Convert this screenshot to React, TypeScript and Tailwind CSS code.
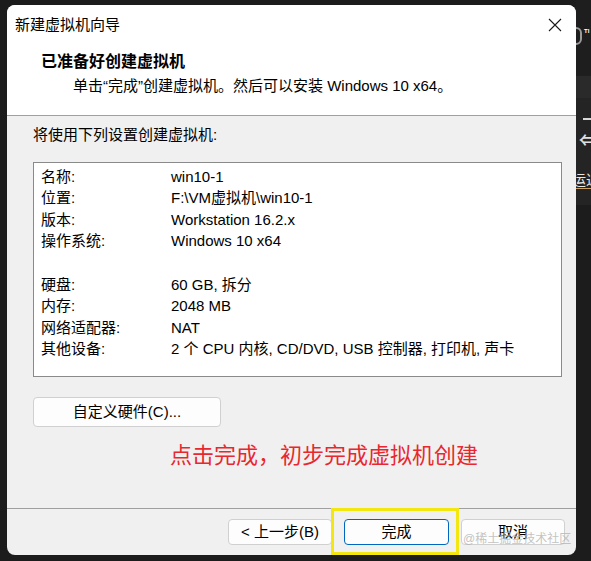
import React from "react";

type Row = { label: string; value: string } | null;

const rows: Row[] = [
  { label: "名称:", value: "win10-1" },
  { label: "位置:", value: "F:\\VM虚拟机\\win10-1" },
  { label: "版本:", value: "Workstation 16.2.x" },
  { label: "操作系统:", value: "Windows 10 x64" },
  null,
  { label: "硬盘:", value: "60 GB, 拆分" },
  { label: "内存:", value: "2048 MB" },
  { label: "网络适配器:", value: "NAT" },
  { label: "其他设备:", value: "2 个 CPU 内核, CD/DVD, USB 控制器, 打印机, 声卡" },
];

function CloseIcon() {
  return (
    <svg width="14" height="14" viewBox="0 0 14 14" fill="none">
      <path d="M1 1 L13 13 M13 1 L1 13" stroke="#1a1a1a" strokeWidth="1.1" />
    </svg>
  );
}

function SideStrip() {
  // bits of the window behind the dialog
  return (
    <div className="flex w-[15px] flex-col overflow-hidden">
      <div className="flex h-[76px] items-start bg-[#1e1e1e] pt-[27px]">
        <div className="-ml-[6px] h-[18px] w-[12px] rounded-full border-2 border-[#9a9a9a]"></div>
        <span className="ml-[2px] text-[6px] font-bold leading-[8px] text-white">TI</span>
      </div>
      <div className="h-[22px] bg-[#2a2a2a]"></div>
      <div className="flex h-[107px] flex-col bg-[#242424]">
        <div className="ml-[7px] mt-[20px] h-[2px] w-[10px] bg-[#d8d8d8]"></div>
        <div className="ml-[3px] mt-[12px] text-[16px] font-bold leading-[18px] text-[#e0e0e0]">⇐</div>
        <div className="-ml-[4px] mt-[22px] whitespace-nowrap border-b border-[#d0a060] text-[14px] leading-[16px] text-[#e8e8e8]">
          运近
        </div>
      </div>
      <div className="flex-1 bg-[#1c1c1c]"></div>
    </div>
  );
}

export default function App() {
  return (
    <div className="flex h-[561px] w-[591px] overflow-hidden bg-[#1c1c1c] font-['Liberation_Sans','Noto_Sans_CJK_SC',sans-serif] text-[#000]">
      <div className="relative ml-[7px] mt-[5px] flex h-[550px] w-[569px] flex-col overflow-hidden rounded-lg bg-[#f0f0f0]">
        {/* header */}
        <div className="flex h-[110px] flex-col bg-white">
          <div className="flex h-[40px] items-center justify-between pl-[8px] pr-[14px]">
            <span className="text-[15px] leading-[20px]">新建虚拟机向导</span>
            <CloseIcon />
          </div>
          <div className="mt-[7px] pl-[34px] text-[16px] font-bold leading-[20px]">已准备好创建虚拟机</div>
          <div className="mt-[4px] pl-[66px] text-[15px] leading-[20px]">
            单击“完成”创建虚拟机。然后可以安装 Windows 10 x64。
          </div>
        </div>
        <div className="h-px bg-[#a0a0a0]"></div>

        {/* body */}
        <div className="flex flex-1 flex-col pl-[26px] pt-[9px]">
          <div className="text-[15px] leading-[20px]">将使用下列设置创建虚拟机:</div>
          <div className="mt-[17px] h-[215px] w-[529px] border border-[#8a8a8a] bg-white pt-[3px] pl-[7px]">
            {rows.map((r, i) =>
              r ? (
                <div key={i} className="flex h-[21.6px] items-center text-[15px]">
                  <span className="w-[130px] shrink-0">{r.label}</span>
                  <span className="whitespace-nowrap">{r.value}</span>
                </div>
              ) : (
                <div key={i} className="h-[21.6px]"></div>
              )
            )}
          </div>
          <button className="mt-[20px] flex h-[30px] w-[188px] items-center justify-center rounded-[4px] border border-[#d0d0d0] bg-[#fdfdfd] text-[15px]">
            自定义硬件(C)...
          </button>
          <div className="ml-[137px] mt-[14px] text-[22px] leading-[30px] text-[#e8282e]">
            点击完成，初步完成虚拟机创建
          </div>
        </div>

        {/* footer */}
        <div className="h-px bg-[#a0a0a0]"></div>
        <div className="flex h-[46px] items-start justify-end gap-[12px] pr-[11px] pt-[10px]">
          <button className="flex h-[26px] w-[104px] items-center justify-center rounded-[4px] border border-[#d0d0d0] bg-[#fdfdfd] text-[15px]">
            &lt; 上一步(B)
          </button>
          <button className="flex h-[26px] w-[105px] items-center justify-center rounded-[4px] border border-[#0067c0] bg-[#fdfdfd] text-[15px]">
            完成
          </button>
          <button className="flex h-[26px] w-[104px] items-center justify-center rounded-[4px] border border-[#d0d0d0] bg-[#fdfdfd] text-[15px]">
            取消
          </button>
        </div>

        {/* annotation + watermark */}
        <div className="absolute left-[324px] top-[503px] h-[47px] w-[128px] border-[3px] border-[#f4e70f]"></div>
        <div className="absolute left-[456px] top-[526px] whitespace-nowrap text-[12px] leading-[16px] text-[#b4b4b4]/80">
          @稀土掘金技术社区
        </div>
      </div>
      <SideStrip />
    </div>
  );
}
